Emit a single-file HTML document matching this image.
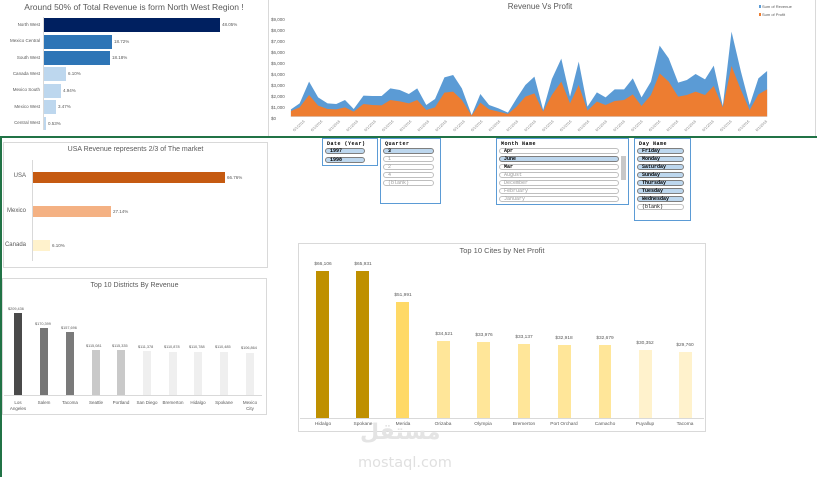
<!DOCTYPE html>
<html><head><meta charset="utf-8">
<style>
*{margin:0;padding:0;box-sizing:border-box}
body{width:817px;height:477px;background:#fff;position:relative;overflow:hidden;font-family:"Liberation Sans",sans-serif;color:#595959}
.a{position:absolute}
.t{position:absolute;white-space:nowrap}
.box{position:absolute;border:1px solid #d9d9d9;background:#fff}
.sl{position:absolute;border:1.5px solid #5b9bd5;background:#fff}
.sl .h{font:bold 5px "Liberation Mono",monospace;color:#000;position:absolute;left:4px;top:2px;letter-spacing:0.5px}
.it{position:absolute;left:2px;right:6px;height:6px;border-radius:4px;border:1px solid #bfbfbf;font:bold 5px "Liberation Mono",monospace;color:#000;padding-left:4px;line-height:5px}
.on{background:#bdd7ee;border-color:#7f7f7f}
.off{background:#fff;color:#999;font-weight:normal}
</style></head><body>

<!-- green lines -->
<div class="a" style="left:0;top:136px;width:817px;height:2px;background:#217346"></div>
<div class="a" style="left:0;top:137px;width:2px;height:340px;background:#217346"></div>

<!-- top-left chart -->
<div class="a" style="left:268px;top:0;width:1px;height:136px;background:#d9d9d9"></div>
<div class="t" style="left:0;width:268px;text-align:center;top:2px;font-size:8.5px;color:#595959">Around 50% of Total Revenue is form North West Region !</div>
<div class="a" style="left:43px;top:17px;width:1px;height:113px;background:#d9d9d9"></div>
<div class="t" style="left:0;width:40px;text-align:right;top:22px;font-size:4.5px">North West</div>
<div class="t" style="left:0;width:40px;text-align:right;top:38px;font-size:4.5px">Mexico Central</div>
<div class="t" style="left:0;width:40px;text-align:right;top:55px;font-size:4.5px">South West</div>
<div class="t" style="left:0;width:40px;text-align:right;top:71px;font-size:4.5px">Canada West</div>
<div class="t" style="left:0;width:40px;text-align:right;top:87px;font-size:4.5px">Mexico South</div>
<div class="t" style="left:0;width:40px;text-align:right;top:104px;font-size:4.5px">Mexico West</div>
<div class="t" style="left:0;width:40px;text-align:right;top:120px;font-size:4.5px">Central West</div>
<div class="a" style="left:44px;top:18px;width:176px;height:14px;background:#002060"></div>
<div class="a" style="left:44px;top:35px;width:68px;height:14px;background:#2e75b6"></div>
<div class="a" style="left:44px;top:51px;width:66px;height:14px;background:#2e75b6"></div>
<div class="a" style="left:44px;top:67px;width:22px;height:14px;background:#bdd7ee"></div>
<div class="a" style="left:44px;top:84px;width:17px;height:14px;background:#bdd7ee"></div>
<div class="a" style="left:44px;top:100px;width:12px;height:14px;background:#bdd7ee"></div>
<div class="a" style="left:44px;top:117px;width:2px;height:13px;background:#bdd7ee"></div>
<div class="t" style="left:222px;top:22px;font-size:4.5px">48.05%</div>
<div class="t" style="left:114px;top:39px;font-size:4.5px">18.72%</div>
<div class="t" style="left:112px;top:55px;font-size:4.5px">18.18%</div>
<div class="t" style="left:68px;top:71px;font-size:4.5px">6.10%</div>
<div class="t" style="left:63px;top:88px;font-size:4.5px">4.94%</div>
<div class="t" style="left:58px;top:104px;font-size:4.5px">3.47%</div>
<div class="t" style="left:48px;top:121px;font-size:4.5px">0.53%</div>

<!-- area chart -->
<div class="a" style="left:815px;top:0;width:1px;height:136px;background:#d9d9d9"></div>
<div class="t" style="left:480px;width:120px;text-align:center;top:2px;font-size:8px">Revenue Vs Profit</div>
<div class="a" style="left:759px;top:5px;width:2px;height:3px;background:#5b9bd5"></div>
<div class="t" style="left:762px;top:4px;font-size:4px">Sum of Revenue</div>
<div class="a" style="left:759px;top:13px;width:2px;height:3px;background:#ed7d31"></div>
<div class="t" style="left:762px;top:12px;font-size:4px">Sum of Profit</div>
<div class="t" style="left:271px;top:14px;font-size:4.5px;line-height:11px;width:18px">$9,000<br>$8,000<br>$7,000<br>$6,000<br>$5,000<br>$4,000<br>$3,000<br>$2,000<br>$1,000<br>$0</div>
<svg class="a" style="left:270px;top:0" width="547" height="140" viewBox="0 0 1568 420" preserveAspectRatio="none">
<polygon fill="#5b9bd5" points="60,328 85,310 112,245 138,292 165,310 190,312 215,300 240,327 268,287 293,288 320,288 345,265 372,270 398,282 422,265 448,315 473,297 500,232 525,225 550,265 578,345 603,282 628,315 655,325 682,338 707,295 732,255 758,230 783,330 808,237 835,176 860,290 885,185 910,320 937,277 962,292 988,268 1015,268 1040,235 1065,292 1092,245 1117,137 1143,175 1170,248 1195,240 1220,222 1247,238 1272,197 1298,318 1323,95 1350,215 1375,315 1400,235 1425,213 1425,350 60,350"/>
<polygon fill="#ed7d31" points="60,333 85,322 112,285 138,317 165,327 190,328 215,322 240,335 268,312 293,315 320,316 345,300 372,304 398,310 422,300 448,330 473,322 500,278 525,275 550,300 578,347 603,308 628,328 655,335 682,342 707,320 732,290 758,280 783,335 808,285 835,245 860,310 885,255 910,332 937,305 962,315 988,303 1015,300 1040,283 1065,318 1092,285 1117,220 1143,245 1170,290 1195,285 1220,275 1247,285 1272,258 1298,322 1323,198 1350,270 1375,330 1400,283 1425,268 1425,350 60,350"/>
<line x1="60" y1="350" x2="1425" y2="350" stroke="#d9d9d9" stroke-width="2"/>
<g fill="#888" font-size="11" font-family="Liberation Sans">
<text transform="translate(70,395) rotate(-45)">6/1/2016</text>
<text transform="translate(121,395) rotate(-45)">6/1/2016</text>
<text transform="translate(172,395) rotate(-45)">6/1/2016</text>
<text transform="translate(223,395) rotate(-45)">6/1/2016</text>
<text transform="translate(274,395) rotate(-45)">6/1/2016</text>
<text transform="translate(325,395) rotate(-45)">6/1/2016</text>
<text transform="translate(376,395) rotate(-45)">6/1/2016</text>
<text transform="translate(427,395) rotate(-45)">6/1/2016</text>
<text transform="translate(478,395) rotate(-45)">6/1/2016</text>
<text transform="translate(529,395) rotate(-45)">6/1/2016</text>
<text transform="translate(580,395) rotate(-45)">6/1/2016</text>
<text transform="translate(631,395) rotate(-45)">6/1/2016</text>
<text transform="translate(682,395) rotate(-45)">6/1/2016</text>
<text transform="translate(733,395) rotate(-45)">6/1/2016</text>
<text transform="translate(784,395) rotate(-45)">6/1/2016</text>
<text transform="translate(835,395) rotate(-45)">6/1/2016</text>
<text transform="translate(886,395) rotate(-45)">6/1/2016</text>
<text transform="translate(937,395) rotate(-45)">6/1/2016</text>
<text transform="translate(988,395) rotate(-45)">6/1/2016</text>
<text transform="translate(1039,395) rotate(-45)">6/1/2016</text>
<text transform="translate(1090,395) rotate(-45)">6/1/2016</text>
<text transform="translate(1141,395) rotate(-45)">6/1/2016</text>
<text transform="translate(1192,395) rotate(-45)">6/1/2016</text>
<text transform="translate(1243,395) rotate(-45)">6/1/2016</text>
<text transform="translate(1294,395) rotate(-45)">6/1/2016</text>
<text transform="translate(1345,395) rotate(-45)">6/1/2016</text>
<text transform="translate(1396,395) rotate(-45)">6/1/2016</text>
</g>
</svg>

<!-- USA chart -->
<div class="box" style="left:3px;top:142px;width:265px;height:126px"></div>
<div class="t" style="left:3px;width:265px;text-align:center;top:146px;font-size:7px">USA Revenue represents 2/3 of The market</div>
<div class="a" style="left:32px;top:160px;width:1px;height:101px;background:#d9d9d9"></div>
<div class="t" style="left:0;width:26px;text-align:right;top:173px;font-size:6px">USA</div>
<div class="t" style="left:0;width:26px;text-align:right;top:208px;font-size:6px">Mexico</div>
<div class="t" style="left:0;width:26px;text-align:right;top:242px;font-size:6px">Canada</div>
<div class="a" style="left:33px;top:172px;width:192px;height:11px;background:#c55a11"></div>
<div class="a" style="left:33px;top:206px;width:78px;height:11px;background:#f4b183"></div>
<div class="a" style="left:33px;top:240px;width:17px;height:11px;background:#fff2cc"></div>
<div class="t" style="left:227px;top:175px;font-size:4.5px">66.76%</div>
<div class="t" style="left:113px;top:209px;font-size:4.5px">27.14%</div>
<div class="t" style="left:52px;top:243px;font-size:4.5px">6.10%</div>

<!-- slicers -->
<div class="sl" style="left:322px;top:138px;width:56px;height:28px"><div class="h">Date (Year)</div>
<div class="it on" style="top:9px;right:12px">1997</div><div class="it on" style="top:18px;right:12px">1998</div></div>
<div class="sl" style="left:380px;top:138px;width:61px;height:66px"><div class="h">Quarter</div>
<div class="it on" style="top:9px">3</div><div class="it off" style="top:17px">1</div><div class="it off" style="top:25px">2</div><div class="it off" style="top:33px">4</div><div class="it off" style="top:41px">(blank)</div></div>
<div class="sl" style="left:496px;top:138px;width:133px;height:67px"><div class="h">Month Name</div>
<div class="it" style="top:9px;right:9px">Apr</div><div class="it on" style="top:17px;right:9px">June</div><div class="it" style="top:25px;right:9px">Mar</div><div class="it off" style="top:33px;right:9px">August</div><div class="it off" style="top:41px;right:9px">December</div><div class="it off" style="top:49px;right:9px">February</div><div class="it off" style="top:57px;right:9px">January</div>
<div class="a" style="right:2px;top:17px;width:5px;height:24px;background:#c8c8c8"></div></div>
<div class="sl" style="left:634px;top:138px;width:57px;height:83px"><div class="h">Day Name</div>
<div class="it on" style="top:9px">Friday</div><div class="it on" style="top:17px">Monday</div><div class="it on" style="top:25px">Saturday</div><div class="it on" style="top:33px">Sunday</div><div class="it on" style="top:41px">Thursday</div><div class="it on" style="top:49px">Tuesday</div><div class="it on" style="top:57px">Wednesday</div><div class="it off" style="top:65px;color:#000">(blank)</div></div>

<!-- districts -->
<div class="box" style="left:2px;top:278px;width:265px;height:137px"></div>
<div class="t" style="left:2px;width:265px;text-align:center;top:282px;font-size:7px">Top 10 Districts By Revenue</div>
<div class="a" style="left:4px;top:395px;width:258px;height:1px;background:#d9d9d9"></div>
<div class="a" style="left:14px;top:313px;width:8px;height:82px;background:#4a4a4a"></div>
<div class="a" style="left:40px;top:328px;width:8px;height:67px;background:#767676"></div>
<div class="a" style="left:66px;top:332px;width:8px;height:63px;background:#7a7a7a"></div>
<div class="a" style="left:92px;top:350px;width:8px;height:45px;background:#c9c9c9"></div>
<div class="a" style="left:117px;top:350px;width:8px;height:45px;background:#c9c9c9"></div>
<div class="a" style="left:143px;top:351px;width:8px;height:44px;background:#efefef"></div>
<div class="a" style="left:169px;top:352px;width:8px;height:43px;background:#efefef"></div>
<div class="a" style="left:194px;top:352px;width:8px;height:43px;background:#efefef"></div>
<div class="a" style="left:220px;top:352px;width:8px;height:43px;background:#efefef"></div>
<div class="a" style="left:246px;top:353px;width:8px;height:42px;background:#efefef"></div>
<div class="t" style="left:8px;top:307px;font-size:3.8px">$209,436</div>
<div class="t" style="left:35px;top:322px;font-size:3.8px">$170,399</div>
<div class="t" style="left:61px;top:326px;font-size:3.8px">$157,696</div>
<div class="t" style="left:86px;top:344px;font-size:3.8px">$115,081</div>
<div class="t" style="left:112px;top:344px;font-size:3.8px">$115,335</div>
<div class="t" style="left:138px;top:345px;font-size:3.8px">$111,378</div>
<div class="t" style="left:164px;top:345px;font-size:3.8px">$110,878</div>
<div class="t" style="left:189px;top:345px;font-size:3.8px">$110,788</div>
<div class="t" style="left:215px;top:345px;font-size:3.8px">$110,485</div>
<div class="t" style="left:241px;top:346px;font-size:3.8px">$106,864</div>
<div class="t" style="left:6px;width:24px;text-align:center;top:400px;font-size:4.5px;line-height:6px">Los<br>Angeles</div>
<div class="t" style="left:32px;width:24px;text-align:center;top:400px;font-size:4.5px">Salem</div>
<div class="t" style="left:58px;width:24px;text-align:center;top:400px;font-size:4.5px">Tacoma</div>
<div class="t" style="left:84px;width:24px;text-align:center;top:400px;font-size:4.5px">Seattle</div>
<div class="t" style="left:109px;width:24px;text-align:center;top:400px;font-size:4.5px">Portland</div>
<div class="t" style="left:134px;width:26px;text-align:center;top:400px;font-size:4.5px">San Diego</div>
<div class="t" style="left:160px;width:26px;text-align:center;top:400px;font-size:4.5px">Bremerton</div>
<div class="t" style="left:186px;width:24px;text-align:center;top:400px;font-size:4.5px">Hidalgo</div>
<div class="t" style="left:212px;width:24px;text-align:center;top:400px;font-size:4.5px">Spokane</div>
<div class="t" style="left:238px;width:24px;text-align:center;top:400px;font-size:4.5px;line-height:6px">Mexico<br>City</div>

<!-- net profit -->
<div class="box" style="left:298px;top:243px;width:408px;height:189px"></div>
<div class="t" style="left:298px;width:408px;text-align:center;top:246px;font-size:7.5px">Top 10 Cites by Net Profit</div>
<div class="a" style="left:300px;top:418px;width:404px;height:1px;background:#d9d9d9"></div>
<div class="a" style="left:316px;top:271px;width:13px;height:147px;background:#bf9000"></div>
<div class="a" style="left:356px;top:271px;width:13px;height:147px;background:#bf9000"></div>
<div class="a" style="left:396px;top:302px;width:13px;height:116px;background:#ffd966"></div>
<div class="a" style="left:437px;top:341px;width:13px;height:77px;background:#ffe699"></div>
<div class="a" style="left:477px;top:342px;width:13px;height:76px;background:#ffe699"></div>
<div class="a" style="left:518px;top:344px;width:12px;height:74px;background:#ffe699"></div>
<div class="a" style="left:558px;top:345px;width:13px;height:73px;background:#ffe699"></div>
<div class="a" style="left:599px;top:345px;width:12px;height:73px;background:#ffe699"></div>
<div class="a" style="left:639px;top:350px;width:13px;height:68px;background:#fff2cc"></div>
<div class="a" style="left:679px;top:352px;width:13px;height:66px;background:#fff2cc"></div>
<div class="t" style="left:308px;width:30px;text-align:center;top:262px;font-size:4.8px">$66,106</div>
<div class="t" style="left:348px;width:30px;text-align:center;top:262px;font-size:4.8px">$65,931</div>
<div class="t" style="left:388px;width:30px;text-align:center;top:293px;font-size:4.8px">$51,991</div>
<div class="t" style="left:429px;width:30px;text-align:center;top:332px;font-size:4.8px">$34,521</div>
<div class="t" style="left:469px;width:30px;text-align:center;top:333px;font-size:4.8px">$33,976</div>
<div class="t" style="left:509px;width:30px;text-align:center;top:335px;font-size:4.8px">$33,137</div>
<div class="t" style="left:549px;width:30px;text-align:center;top:336px;font-size:4.8px">$32,918</div>
<div class="t" style="left:590px;width:30px;text-align:center;top:336px;font-size:4.8px">$32,679</div>
<div class="t" style="left:630px;width:30px;text-align:center;top:341px;font-size:4.8px">$30,352</div>
<div class="t" style="left:670px;width:30px;text-align:center;top:343px;font-size:4.8px">$29,760</div>
<div class="t" style="left:303px;width:40px;text-align:center;top:422px;font-size:4.8px">Hidalgo</div>
<div class="t" style="left:343px;width:40px;text-align:center;top:422px;font-size:4.8px">Spokane</div>
<div class="t" style="left:383px;width:40px;text-align:center;top:422px;font-size:4.8px">Merida</div>
<div class="t" style="left:423px;width:40px;text-align:center;top:422px;font-size:4.8px">Orizaba</div>
<div class="t" style="left:463px;width:40px;text-align:center;top:422px;font-size:4.8px">Olympia</div>
<div class="t" style="left:504px;width:40px;text-align:center;top:422px;font-size:4.8px">Bremerton</div>
<div class="t" style="left:544px;width:40px;text-align:center;top:422px;font-size:4.8px">Port Orchard</div>
<div class="t" style="left:585px;width:40px;text-align:center;top:422px;font-size:4.8px">Camacho</div>
<div class="t" style="left:625px;width:40px;text-align:center;top:422px;font-size:4.8px">Puyallup</div>
<div class="t" style="left:665px;width:40px;text-align:center;top:422px;font-size:4.8px">Tacoma</div>

<!-- watermark -->
<div class="t" style="left:360px;top:420px;font-size:22px;font-weight:bold;color:#e4e4e4;font-family:'DejaVu Sans',sans-serif">مستقل</div>
<div class="t" style="left:358px;top:455px;font-size:14.5px;color:#e0e0e0;font-family:'DejaVu Sans',sans-serif">mostaql.com</div>
</body></html>
